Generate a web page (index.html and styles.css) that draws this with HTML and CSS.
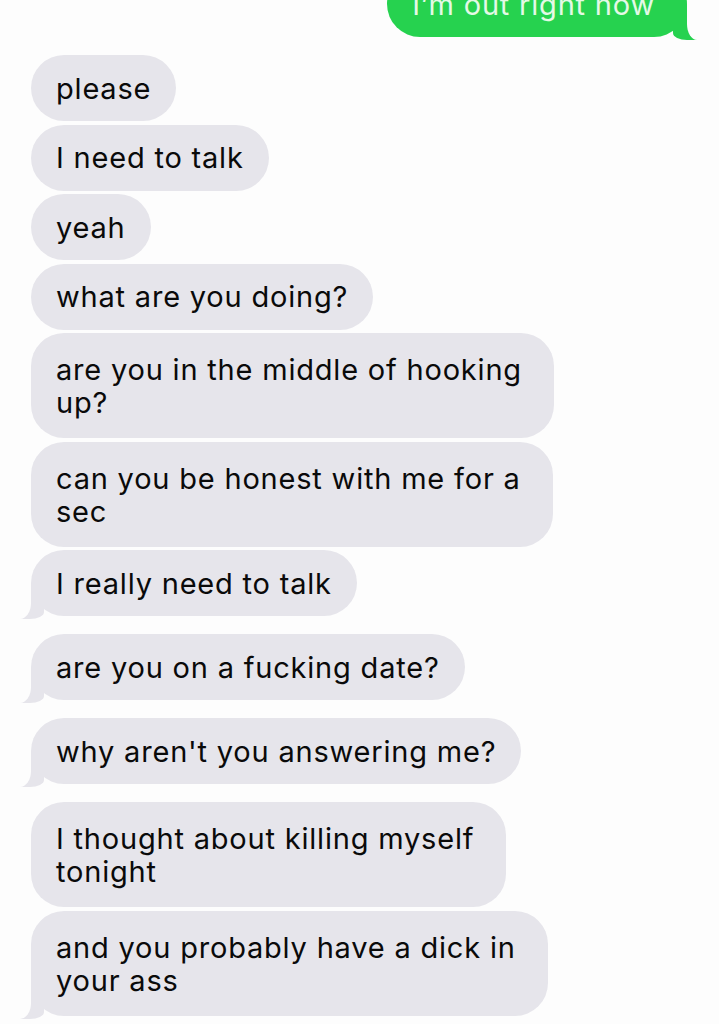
FILE: index.html
```html
<!DOCTYPE html>
<html lang="en">
<head>
<meta charset="utf-8">
<title>Messages</title>
<link rel="stylesheet" href="styles.css">
</head>
<body>
<main class="thread">
  <div class="bubble sent tail">I’m out right now</div>
  <div class="bubble recv">please</div>
  <div class="bubble recv">I need to talk</div>
  <div class="bubble recv">yeah</div>
  <div class="bubble recv">what are you doing?</div>
  <div class="bubble recv multi">are you in the middle of hooking<br>up?</div>
  <div class="bubble recv multi">can you be honest with me for a<br>sec</div>
  <div class="bubble recv tail">I really need to talk</div>
  <div class="bubble recv tail">are you on a fucking date?</div>
  <div class="bubble recv tail">why aren't you answering me?</div>
  <div class="bubble recv multi">I thought about killing myself<br>tonight</div>
  <div class="bubble recv multi tail">and you probably have a dick in<br>your ass</div>
</main>
</body>
</html>
```
FILE: styles.css
```css
html, body {
  margin: 0;
  padding: 0;
  background: #fdfdfd;
}

body {
  width: 719px;
  height: 1024px;
  overflow: hidden;
  font-family: Inter, "Liberation Sans", Arial, sans-serif;
}

.thread {
  display: flex;
  flex-direction: column;
  align-items: flex-start;
  padding: 0 0 0 31px;
}

.bubble {
  position: relative;
  font-size: 29px;
  line-height: 33px;
  letter-spacing: 0.8px;
  padding: 16.5px 25px;
  border-radius: 33px;
  margin-bottom: 3.5px;
  white-space: nowrap;
}

.recv {
  background: #e6e5eb;
  color: #0a0a0a;
}

.sent {
  align-self: flex-end;
  margin-top: -29px;
  margin-right: 32px;
  padding-right: 32px;
  background: #26d24f;
  color: #e4f9e6;
}

.multi {
  padding: 20px 32px 19px 25px;
}

.tail {
  margin-bottom: 18px;
}

.tail::before,
.tail::after {
  content: "";
  position: absolute;
  bottom: -3px;
}

.recv.tail::before {
  left: -11px;
  width: 24px;
  height: 36px;
  background: #e6e5eb;
  border-bottom-right-radius: 14px 7px;
}

.recv.tail::after {
  left: -30px;
  width: 30px;
  height: 38px;
  background: #fdfdfd;
  border-bottom-right-radius: 11px 16px;
}

.sent.tail::before {
  right: -10px;
  width: 24px;
  height: 36px;
  background: #26d24f;
  border-bottom-left-radius: 14px 7px;
}

.sent.tail::after {
  right: -30px;
  width: 30px;
  height: 38px;
  background: #fdfdfd;
  border-bottom-left-radius: 10px 16px;
}
```
